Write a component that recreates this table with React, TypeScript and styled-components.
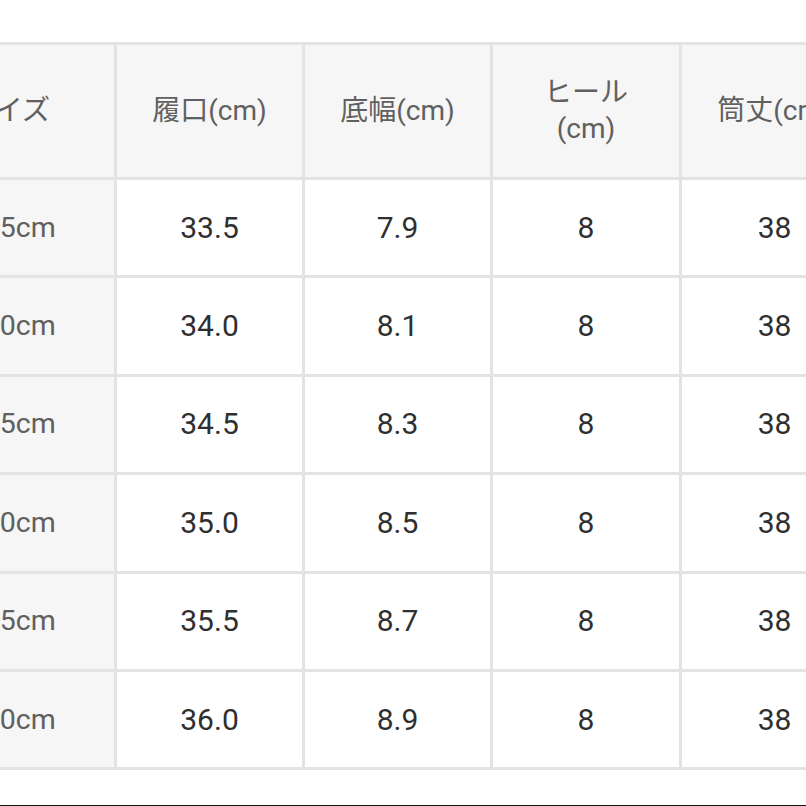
import React from "react";
import styled, { createGlobalStyle } from "styled-components";

const GlobalStyle = createGlobalStyle`
  html, body {
    margin: 0;
    padding: 0;
    background: #ffffff;
    overflow: hidden;
  }
  body {
    font-family: Roboto, "Noto Sans CJK JP", "Noto Sans", sans-serif;
  }
`;

const columns = ["履口(cm)", "底幅(cm)", "ヒール\n(cm)", "筒丈(cm)"];

const rows = [
  { size: "22.5cm", values: ["33.5", "7.9", "8", "38"] },
  { size: "23.0cm", values: ["34.0", "8.1", "8", "38"] },
  { size: "23.5cm", values: ["34.5", "8.3", "8", "38"] },
  { size: "24.0cm", values: ["35.0", "8.5", "8", "38"] },
  { size: "24.5cm", values: ["35.5", "8.7", "8", "38"] },
  { size: "25.0cm", values: ["36.0", "8.9", "8", "38"] },
];

const widths = [209, 188, 188, 189, 188];

const Page = styled.div`
  padding-top: 42px;
  width: 806px;
  overflow: hidden;
`;

const Scroller = styled.div`
  margin-left: -95px;
`;

const Table = styled.table`
  border-collapse: collapse;
  table-layout: fixed;
  width: 962px;
`;

const Col = styled.col<{ $w: number }>`
  width: ${(p) => p.$w}px;
`;

const Cell = styled.td<{ $head?: boolean; $lead?: boolean }>`
  border: 3px solid #e3e3e3;
  padding: ${(p) => (p.$lead ? "0 11px 0 5px" : "0 8px")};
  text-align: center;
  vertical-align: middle;
  font-size: ${(p) => (p.$lead ? "28.5px" : p.$head ? "28px" : "30px")};
  line-height: 36px;
  font-weight: 400;
  color: ${(p) => (p.$head ? "#606060" : "#2f2f2f")};
  background: ${(p) => (p.$head ? "#f6f6f6" : "#ffffff")};
  white-space: pre-line;
`;

const HeadRow = styled.tr`
  height: 135px;
`;

const BodyRow = styled.tr`
  height: 98.4px;
`;

const Rule = styled.div`
  margin-top: 35px;
  border-top: 3px solid #111111;
`;

export default function App() {
  return (
    <>
      <GlobalStyle />
      <Page>
        <Scroller>
          <Table>
            <colgroup>
              {widths.map((w, i) => (
                <Col key={i} $w={w} />
              ))}
            </colgroup>
            <thead>
              <HeadRow>
                <Cell as="th" $head $lead>
                  サイズ
                </Cell>
                {columns.map((c) => (
                  <Cell as="th" $head key={c}>
                    {c}
                  </Cell>
                ))}
              </HeadRow>
            </thead>
            <tbody>
              {rows.map((r) => (
                <BodyRow key={r.size}>
                  <Cell as="th" $head $lead>
                    {r.size}
                  </Cell>
                  {r.values.map((v, i) => (
                    <Cell key={i}>{v}</Cell>
                  ))}
                </BodyRow>
              ))}
            </tbody>
          </Table>
        </Scroller>
        <Rule />
      </Page>
    </>
  );
}
